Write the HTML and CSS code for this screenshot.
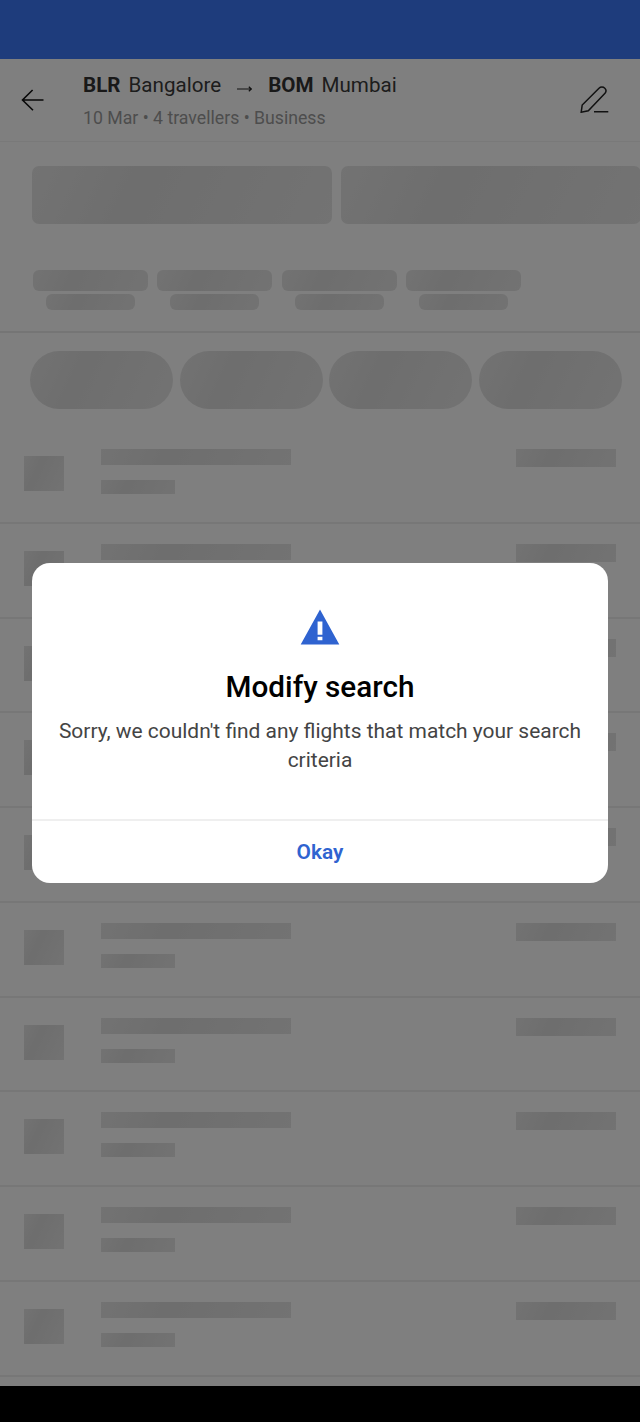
FILE: index.html
```html
<!DOCTYPE html>
<html lang="en">
<head>
<meta charset="utf-8">
<title>Flight search</title>
<link rel="stylesheet" href="styles.css">
</head>
<body>
<div class="screen">
  <div class="app">
    <div class="statusbar"></div>
    <header class="header">
      <svg class="back" viewBox="0 0 24 24" aria-hidden="true"><path d="M22.5 12H1.5M11.6 2 1.5 12 12 22.3"/></svg>
      <div class="route">
        <div class="route-title"><b class="code">BLR</b><span class="city">Bangalore</span><svg class="arrow" viewBox="0 0 15 8" aria-hidden="true"><path d="M0 4H14.3M11.8 1.8 14.3 4 11.8 6.2"/></svg><b class="code">BOM</b><span class="city">Mumbai</span></div>
        <div class="route-sub">10 Mar • 4 travellers • Business</div>
      </div>
      <svg class="edit" viewBox="0 0 30 27" aria-hidden="true"><path d="M1.2 26.2 2.2 19 19 2.3C20.6.7 23.2.7 24.8 2.3S26.4 5.6 25 7.3L8.3 24.7ZM14 25.7h14.3"/></svg>
    </header>
    <section class="offers">
      <div class="offer-row"><div class="sk offer"></div><div class="sk offer"></div></div>
      <div class="tabs">
        <div class="tab"><div class="sk tab-top"></div><div class="sk tab-bottom"></div></div>
        <div class="tab"><div class="sk tab-top"></div><div class="sk tab-bottom"></div></div>
        <div class="tab"><div class="sk tab-top"></div><div class="sk tab-bottom"></div></div>
        <div class="tab"><div class="sk tab-top"></div><div class="sk tab-bottom"></div></div>
      </div>
    </section>
    <section class="pills">
      <div class="sk pill"></div><div class="sk pill"></div><div class="sk pill"></div><div class="sk pill"></div>
    </section>
    <section class="list">
      <div class="row"><div class="sk thumb"></div><div class="lines"><div class="sk line-a"></div><div class="sk line-b"></div></div><div class="sk price"></div></div>
      <div class="row"><div class="sk thumb"></div><div class="lines"><div class="sk line-a"></div><div class="sk line-b"></div></div><div class="sk price"></div></div>
      <div class="row"><div class="sk thumb"></div><div class="lines"><div class="sk line-a"></div><div class="sk line-b"></div></div><div class="sk price"></div></div>
      <div class="row"><div class="sk thumb"></div><div class="lines"><div class="sk line-a"></div><div class="sk line-b"></div></div><div class="sk price"></div></div>
      <div class="row"><div class="sk thumb"></div><div class="lines"><div class="sk line-a"></div><div class="sk line-b"></div></div><div class="sk price"></div></div>
      <div class="row"><div class="sk thumb"></div><div class="lines"><div class="sk line-a"></div><div class="sk line-b"></div></div><div class="sk price"></div></div>
      <div class="row"><div class="sk thumb"></div><div class="lines"><div class="sk line-a"></div><div class="sk line-b"></div></div><div class="sk price"></div></div>
      <div class="row"><div class="sk thumb"></div><div class="lines"><div class="sk line-a"></div><div class="sk line-b"></div></div><div class="sk price"></div></div>
      <div class="row"><div class="sk thumb"></div><div class="lines"><div class="sk line-a"></div><div class="sk line-b"></div></div><div class="sk price"></div></div>
      <div class="row"><div class="sk thumb"></div><div class="lines"><div class="sk line-a"></div><div class="sk line-b"></div></div><div class="sk price"></div></div>
    </section>
    <div class="overlay">
      <div class="dialog" role="dialog">
        <div class="dialog-body">
          <svg class="warn" viewBox="0 0 40 36" aria-hidden="true"><path fill-rule="evenodd" d="M20 .5 39.3 35.5H.7L20 .5ZM17.6 12.5v13.2h4.8V12.5h-4.8Zm0 15.2v3.6h4.8v-3.6h-4.8Z"/></svg>
          <h2 class="dialog-title">Modify search</h2>
          <p class="dialog-text">Sorry, we couldn't find any flights that match your search criteria</p>
        </div>
        <div class="dialog-action">Okay</div>
      </div>
    </div>
  </div>
  <div class="navbar"></div>
</div>
</body>
</html>
```
FILE: styles.css
```css
* { box-sizing: border-box; }
html, body { margin: 0; padding: 0; }
body { font-family: Roboto, "Liberation Sans", sans-serif; background: #000; }
.screen { width: 640px; height: 1422px; overflow: hidden; display: flex; flex-direction: column; }
.app { position: relative; height: 1386px; background: #eeeeee; overflow: hidden; display: flex; flex-direction: column; }
.navbar { height: 36px; background: #000; }

.statusbar { height: 59px; background: #3c78f8; flex: none; }
.header { height: 83px; flex: none; background: #fff; border-bottom: 1px solid #f2f2f2; display: flex; align-items: flex-start; padding-left: 21px; }
.back { width: 24px; height: 24px; margin-top: 29px; flex: none; fill: none; stroke: #111; stroke-width: 1.6; }
.route { margin-left: 38px; padding-top: 12px; flex: 1; }
.route-title { font-size: 20.6px; line-height: 28px; color: #3a3a3a; display: flex; align-items: center; }
.code { font-weight: 700; color: #333; }
.city { margin-left: 8px; }
.arrow { width: 15px; height: 8px; margin: 8.6px 16px 0 16px; flex: none; fill: none; stroke: #222; stroke-width: 1.2; }
.route-sub { font-size: 17.7px; line-height: 24px; margin-top: 7px; color: #9b9b9b; }
.edit { width: 30px; height: 27px; margin: 27px 30px 0 0; flex: none; fill: none; stroke: #222; stroke-width: 1.5; }

.sk { background: linear-gradient(115deg, #e6e6e6 0%, #dcdcdc 35%, #e6e6e6 100%); }
.offers { height: 191px; flex: none; background: #fff; border-bottom: 2px solid #eaeaea; padding: 24px 0 0 32px; }
.offer-row { display: flex; gap: 9px; }
.offer { width: 300px; height: 58px; border-radius: 7px; flex: none; }
.tabs { display: flex; gap: 9.4px; margin-top: 46px; padding-left: 1px; }
.tab { width: 115px; display: flex; flex-direction: column; align-items: center; gap: 3px; }
.tab-top { width: 115px; height: 21px; border-radius: 6px; }
.tab-bottom { width: 89px; height: 16px; border-radius: 6px; }

.pills { height: 96px; flex: none; background: #fff; display: flex; gap: 6.3px; padding: 18px 0 0 30px; }
.pill { width: 143.3px; height: 58px; border-radius: 29px; flex: none; }

.list { flex: 1; background: #fff; display: flex; flex-direction: column; }
.row { height: 94.78px; flex: none; border-bottom: 2px solid #eeeeee; padding: 20px 24px 0; display: flex; align-items: flex-start; }
.thumb { width: 40px; height: 35px; margin-top: 7px; flex: none; }
.lines { margin-left: 37px; flex: 1; }
.line-a { width: 190px; height: 16px; }
.line-b { width: 74px; height: 14px; margin-top: 15px; }
.price { width: 100px; height: 18px; flex: none; }

.overlay { position: absolute; inset: 0; background: rgba(0, 0, 0, 0.5); }
.dialog { position: absolute; left: 32px; top: 563px; width: 576px; height: 320px; background: #fff; border-radius: 18px; display: flex; flex-direction: column; overflow: hidden; }
.dialog-body { height: 258px; flex: none; border-bottom: 2px solid #efefef; display: flex; flex-direction: column; align-items: center; padding: 45.5px 20px 0; text-align: center; }
.warn { width: 40px; height: 36px; fill: #2f63d0; flex: none; }
.dialog-title { margin: 24px 0 0; font-size: 29.7px; line-height: 36px; font-weight: 500; color: #000; }
.dialog-text { margin: 12px 0 0; font-size: 20.95px; line-height: 29px; color: #444; }
.dialog-action { flex: 1; display: flex; align-items: center; justify-content: center; font-size: 20.9px; font-weight: 600; color: #2f63d0; }
```
